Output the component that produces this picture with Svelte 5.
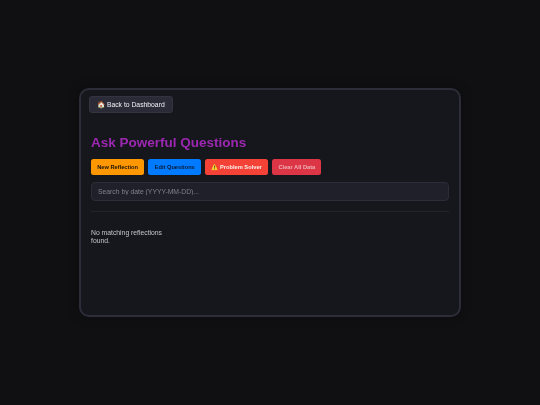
<script>
	let query = $state('');
</script>

<main>
	<section class="card">
		<button class="back"><span class="emoji">🏠</span> Back to Dashboard</button>
		<h1>Ask Powerful Questions</h1>
		<div class="actions">
			<button class="btn orange">New Reflection</button>
			<button class="btn blue">Edit Questions</button>
			<button class="btn red"><span class="emoji">⚠️</span> Problem Solver</button>
			<button class="btn crimson">Clear All Data</button>
		</div>
		<input type="text" placeholder="Search by date (YYYY-MM-DD)..." bind:value={query} />
		<hr />
		<p>No matching reflections found.</p>
	</section>
</main>

<style>
	:global(body) {
		margin: 0;
		background: #101012;
		font-family: "Liberation Sans", Arial, sans-serif;
	}
	main {
		height: 405px;
		display: flex;
		align-items: center;
		justify-content: center;
	}
	.card {
		box-sizing: border-box;
		width: 382px;
		height: 229px;
		padding: 6px 10px;
		background: #16171d;
		border: 2px solid #2c2d38;
		border-radius: 10px;
		box-shadow: 0 0 12px rgba(0, 0, 0, 0.3);
		display: flex;
		flex-direction: column;
		align-items: flex-start;
		will-change: transform;
	}
	button {
		font-family: inherit;
		cursor: pointer;
	}
	.back {
		margin-left: -2px;
		height: 17px;
		padding: 0 7px;
		font-size: 6.8px;
		color: #f0f0f5;
		background: #2a2b36;
		border: 1px solid #33343f;
		border-radius: 3px;
	}
	h1 {
		margin: 21px 0 8px;
		font-size: 13.5px;
		line-height: 17px;
		font-weight: 700;
		color: #9c27b0;
	}
	.actions {
		display: flex;
		gap: 4.3px;
		margin-bottom: 7px;
	}
	.btn {
		height: 16px;
		padding: 0 6.2px;
		font-size: 5.7px;
		font-weight: 700;
		border: 0;
		border-radius: 2.5px;
	}
	.orange {
		background: #ff9800;
		color: #1a1206;
	}
	.blue {
		background: #007bff;
		color: #0b1a33;
	}
	.red {
		background: #f44336;
		color: #fbeeec;
	}
	.crimson {
		background: #dc3545;
		color: #eeb0b6;
	}
	input {
		box-sizing: border-box;
		width: 100%;
		height: 19px;
		padding: 0 6px;
		font-family: inherit;
		font-size: 6.8px;
		color: #e4e4ea;
		background: #1f2029;
		border: 1px solid #2c2d38;
		border-radius: 4px;
		outline: none;
	}
	input::placeholder {
		color: #80818b;
	}
	hr {
		width: 100%;
		margin: 10px 0 0;
		border: 0;
		border-top: 1px solid #22232b;
	}
	p {
		width: 78px;
		margin: 17px 0 0;
		font-size: 6.8px;
		line-height: 8px;
		color: #c4c5cc;
	}
</style>
